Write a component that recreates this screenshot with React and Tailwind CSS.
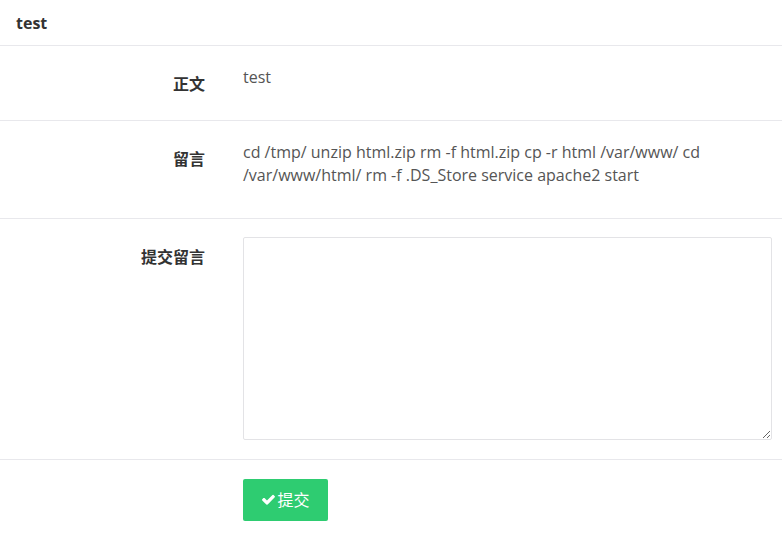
import React from 'react';

const Row = ({ label, children, className = '', labelPad = 'pt-[6px]' }) => (
  <div className={`flex border-b border-[#e8e8ec] ${className}`}>
    <div className={`w-[205px] shrink-0 text-right font-bold text-[#333] text-[16px] ${labelPad}`}>{label}</div>
    <div className="flex-1 pl-[38px] pr-[10px]">{children}</div>
  </div>
);

export default function App() {
  return (
    <div className="min-h-screen bg-white text-[#555]" style={{ fontFamily: '"Open Sans", "Noto Sans CJK SC", sans-serif' }}>
      <div className="h-[46px] border-b border-[#e8e8ec] px-4 flex items-center">
        <span className="font-bold text-[16px] text-[#333]">test</span>
      </div>

      {/* 正文 */}
      <Row label="正文" className="pt-[20px] pb-[22px]">
        <p className="text-[16px] leading-[22px] mb-[10px]">test</p>
      </Row>

      {/* 留言 */}
      <Row label="留言" className="pt-[20px] pb-[21px]">
        <p className="text-[16px] leading-[23px] mb-[10px]">
          cd /tmp/ unzip html.zip rm -f html.zip cp -r html /var/www/ cd /var/www/html/ rm -f .DS_Store service apache2 start
        </p>
      </Row>

      <Row label="提交留言" className="pt-[18px] pb-[19px]" labelPad="pt-[8px]">
        <textarea className="block w-full h-[203px] border border-[#e3e3e6] rounded-[2px] outline-none" />
      </Row>

      <div className="flex pt-[19px]">
        <div className="w-[205px] shrink-0" />
        <div className="pl-[38px]">
          <button className="h-[42px] w-[85px] bg-[#2ecc71] rounded-[2px] text-white text-[16px] flex items-center justify-center">
            <svg width="15" height="13" viewBox="0 0 1792 1536" className="mr-[1px]">
              <path fill="currentColor" d="M1671 326q0 40-28 68l-724 724-136 136q-28 28-68 28t-68-28l-136-136-362-362q-28-28-28-68t28-68l136-136q28-28 68-28t68 28l294 295 656-657q28-28 68-28t68 28l136 136q28 28 28 68z" />
            </svg>
            <span>提交</span>
          </button>
        </div>
      </div>
    </div>
  );
}
